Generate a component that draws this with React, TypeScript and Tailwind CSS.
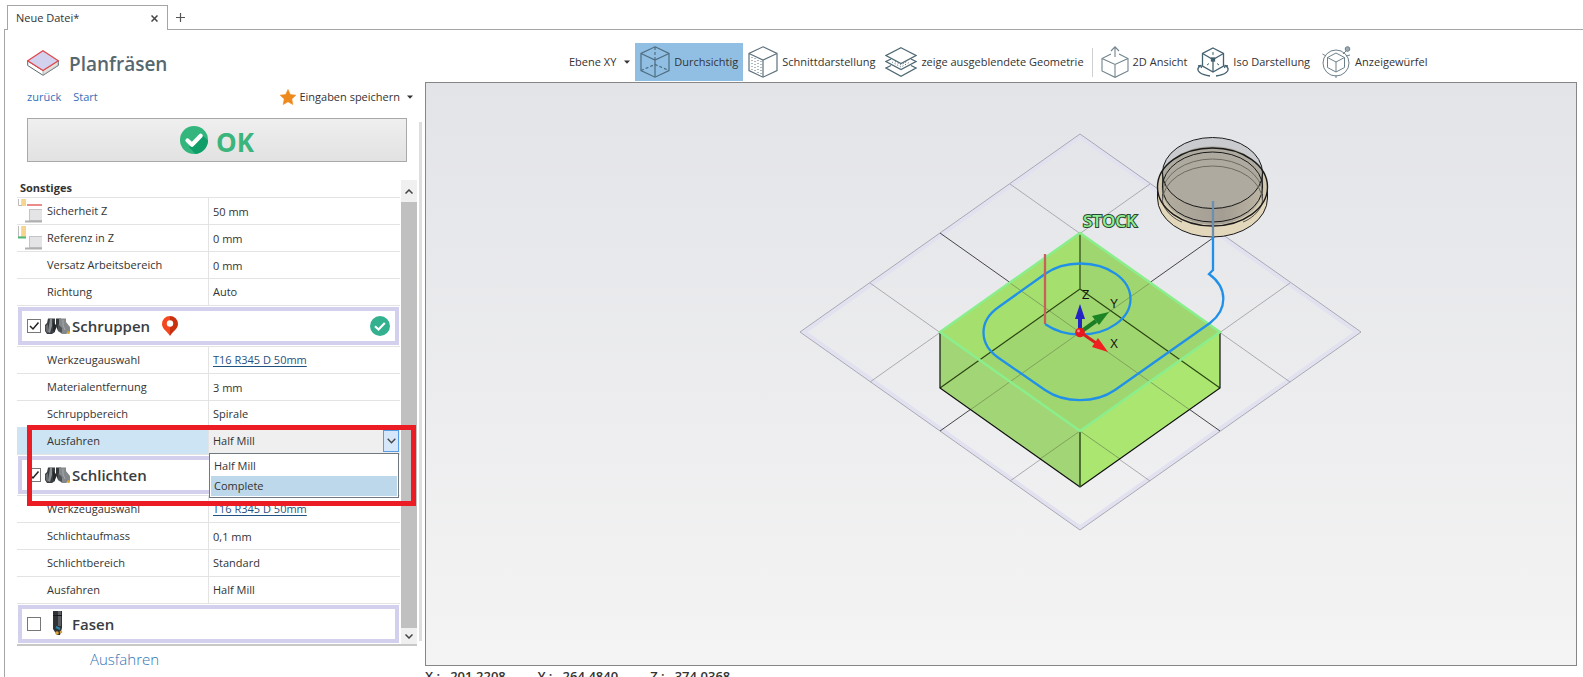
import { useState } from 'react';
import type { ReactNode } from 'react';

type Row = {
  label: string;
  value: string;
  kind?: 'input' | 'text' | 'link';
  icon?: ReactNode;
};

const generalRows: Row[] = [
  { label: 'Sicherheit Z', value: '50 mm', kind: 'input', icon: <SafetyIcon /> },
  { label: 'Referenz in Z', value: '0 mm', kind: 'input', icon: <ReferenceIcon /> },
  { label: 'Versatz Arbeitsbereich', value: '0 mm', kind: 'input' },
  { label: 'Richtung', value: 'Auto' },
];

const roughRows: Row[] = [
  { label: 'Werkzeugauswahl', value: 'T16 R345 D 50mm', kind: 'link' },
  { label: 'Materialentfernung', value: '3 mm', kind: 'input' },
  { label: 'Schruppbereich', value: 'Spirale' },
];

const finishRows: Row[] = [
  { label: 'Werkzeugauswahl', value: 'T16 R345 D 50mm', kind: 'link' },
  { label: 'Schlichtaufmass', value: '0,1 mm', kind: 'input' },
  { label: 'Schlichtbereich', value: 'Standard' },
  { label: 'Ausfahren', value: 'Half Mill' },
];

function SafetyIcon() {
  return (
    <svg className="w-6 h-[26px]" viewBox="0 0 24 26">
      <path d="M0.500 1V7.500H4V1" fill="#fff" stroke="#bbb" />
      <rect x="4" y="1" width="4" height="7" fill="#f6d68e" />
      <path d="M9 7H24" stroke="#e0403c" strokeWidth="1.200" />
      <rect x="11.500" y="11.500" width="13" height="11" fill="#e4e4e6" stroke="#c4c4c6" />
      <path d="M7 23.500H24" stroke="#b0b0b3" strokeWidth="2" />
    </svg>
  );
}

function ReferenceIcon() {
  return (
    <svg className="w-6 h-[26px]" viewBox="0 0 24 26">
      <path d="M0.500 1V12H4V1" fill="#fff" stroke="#bbb" />
      <rect x="4" y="1" width="4" height="11" fill="#f6d68e" />
      <path d="M0 12.500H8" stroke="#4fb978" strokeWidth="2" />
      <rect x="11.500" y="11.500" width="13" height="11" fill="#e4e4e6" stroke="#c4c4c6" />
      <path d="M7 23.500H24" stroke="#b0b0b3" strokeWidth="2" />
    </svg>
  );
}

function FaceMillIcon() {
  return (
    <svg className="w-8 h-[26px]" viewBox="0 0 32 26">
      <path d="M0.700 11V15.500L16 25.300L31.300 15.500V11L16 20.500Z" fill="#fff" stroke="#56676f" />
      <path d="M16 20.500L31 11V15.300L16 25Z" fill="#e2dfdc" stroke="#8a9095" strokeWidth="0.600" />
      <path d="M16 0.700L31.300 10.700L16 20.500L0.700 10.700Z" fill="#d2d1ee" stroke="#e0484c" strokeWidth="1.300" />
    </svg>
  );
}

function CheckCircle({ className }: { className: string }) {
  return (
    <svg className={className} viewBox="0 0 28 28">
      <circle cx="14" cy="14" r="14" fill="#33b67d" />
      <path d="M21.500 8.500L28 14.500A14 14 0 0 1 15.500 28L9 21Z" fill="#0f9d69" />
      <path d="M7.500 14.500L12 18.700L20.700 9.800" fill="none" stroke="#fff" strokeWidth="4.200" strokeLinecap="round" strokeLinejoin="round" />
    </svg>
  );
}

function FlatCheckCircle() {
  return (
    <svg className="size-5" viewBox="0 0 20 20">
      <circle cx="10" cy="10" r="10" fill="#33b08d" />
      <path d="M5 10.300L8.500 13.500L14.800 7" fill="none" stroke="#fff" strokeWidth="2.200" />
    </svg>
  );
}

function CutterIcon() {
  return (
    <svg className="w-[25px] h-[17px]" viewBox="0 0 25 17">
      <path d="M3 0.500H10V14L7 16H2L0 13V7L2 5Z" fill="#3b3e41" />
      <path d="M5 1H7V8L5 15L3 14Z" fill="#8a8e91" />
      <path d="M0.500 8L3 6V15L1 13Z" fill="#686c6f" />
      <path d="M8 4L12 8L10 13H8Z" fill="#26282a" />
      <path d="M11 0.500H16V12L13 13L11 8Z" fill="#34373a" />
      <path d="M14 0.500H21V4L25 9V14L21 16H17L13 13L14 8Z" fill="#85888a" />
      <path d="M13 6L17 10V15L13 13Z" fill="#505356" />
      <path d="M18 2V7L20 12" fill="none" stroke="#a5a8aa" />
      <circle cx="23.500" cy="14.500" r="1.500" fill="#d6a82c" />
    </svg>
  );
}

function ChamferIcon() {
  return (
    <svg className="w-[25px] h-[26px]" viewBox="0 0 25 26">
      <path d="M8 0H17V17L15 24H12L8 18Z" fill="#303236" />
      <path d="M13 0H16V15H13Z" fill="#5c5f63" />
      <path d="M8 4.500H17" stroke="#17181a" />
      <path d="M11 16L15 18" stroke="#2c86a8" strokeWidth="2" />
      <circle cx="12" cy="22" r="1.800" fill="#d9a43a" />
      <circle cx="16" cy="21" r="1.300" fill="#d9a43a" />
    </svg>
  );
}

function PinIcon() {
  return (
    <svg className="w-4 h-5" viewBox="0 0 16 20">
      <path d="M8 0A8 8 0 0 0 0 8C0 13 5 15 8 20Z" fill="#f4471f" />
      <path d="M8 0A8 8 0 0 1 16 8C16 13 11 15 8 20Z" fill="#c9300f" />
      <circle cx="8" cy="7.500" r="3.200" fill="#fff" />
    </svg>
  );
}

function StarIcon() {
  return (
    <svg className="w-4 h-4" viewBox="0 0 16 16">
      <path d="M8 0.500L10.300 5.500L15.800 6.200L11.800 10L12.800 15.500L8 12.800L3.200 15.500L4.200 10L0.200 6.200L5.700 5.500Z" fill="#ee8a1d" stroke="#ee8a1d" strokeWidth="0.600" strokeLinejoin="round" />
    </svg>
  );
}

function Caret() {
  return (
    <svg className="w-[6px] h-[4px]" viewBox="0 0 6 4">
      <path d="M0 0.500H6L3 3.700Z" fill="#333" />
    </svg>
  );
}

function TransparentIcon() {
  return (
    <svg className="w-[30px] h-8" viewBox="0 0 30 32" fill="none" stroke="#4d6d80" strokeWidth="1.200">
      <path d="M15 0.800L29 7.500V24.500L15 31.200L1 24.500V7.500Z" />
      <path d="M1 7.500L15 14L29 7.500M15 14V31" />
      <path d="M15 1V14M1 24.500L15 18.500L29 24.500" strokeDasharray="3 2" />
    </svg>
  );
}

function SectionIcon() {
  return (
    <svg className="w-[30px] h-8" viewBox="0 0 30 32" fill="none" stroke="#5d717c" strokeWidth="1.200">
      <path d="M15 0.800L29 7.500V24.500L15 31.200L1 24.500V7.500Z" />
      <path d="M1 7.500L15 14L29 7.500M15 14V31" />
      <path d="M4 11V25M7 12V26M10 14V28M13 15V29" strokeWidth="1" strokeDasharray="1 2" />
    </svg>
  );
}

function LayersIcon() {
  return (
    <svg className="w-8 h-[30px]" viewBox="0 0 32 30" fill="none" stroke="#4f6873" strokeWidth="1.200">
      <path d="M16 0.700L31 8.500L16 16.500L1 8.500Z" />
      <path d="M6 12L1 14.500L16 22.500L31 14.500L26 12" />
      <path d="M6 18.500L1 21L16 29.300L31 21L26 18.500" />
      <path d="M7 15L16 20L25 15M10 14.500L16 18L22 14.500" strokeWidth="1" strokeDasharray="1 2" />
    </svg>
  );
}

function TopViewIcon() {
  return (
    <svg className="w-7 h-8" viewBox="0 0 28 32" fill="none" stroke="#71838c" strokeWidth="1.100">
      <path d="M10 8L1 12.500V25L14 31.300L27 25V12.500L18 8" />
      <path d="M1 12.500L14 18.500L27 12.500M14 18.500V31" />
      <path d="M14 11V1M10 5L14 0.800L18 5" />
    </svg>
  );
}

function IsoIcon() {
  return (
    <svg className="w-8 h-[30px]" viewBox="0 0 32 30" fill="none" stroke="#456271" strokeWidth="1.300">
      <path d="M16 1L26.500 6.500V19L16 25L5.500 19V6.500Z" />
      <path d="M5.500 6.500L16 12.500L26.500 6.500M16 12.500V25" />
      <path d="M16 5V8M10 18L12 16.500M22 18L20 16.500" strokeWidth="1" />
      <path d="M3 19C-3 24 5 28 13 29M29 19C35 24 27 28 19 29M1 19L4 18.500L4.500 21M31 19L28 18.500L27.500 21" />
      <rect x="14.500" y="11" width="3" height="3" fill="#456271" />
    </svg>
  );
}

function ViewCubeIcon() {
  return (
    <svg className="w-[29px] h-8" viewBox="0 0 29 32" fill="none" stroke="#6d808a">
      <circle cx="14" cy="17" r="13" />
      <path d="M14 7L22.500 11.500V21.500L14 26L5.500 21.500V11.500Z" />
      <path d="M5.500 11.500L14 16L22.500 11.500M14 16V26" />
      <circle cx="25.500" cy="3" r="2.300" fill="#9aabb3" />
      <path d="M21 8L24 5M0.500 8L4 10M24 10L28 9M14 29V32" />
    </svg>
  );
}

function PropertyRow({ row }: { row: Row }) {
  const id = `prop-${row.label.replace(/\s+/g, '-').toLowerCase()}`;
  return (
    <tr className="h-[27px]">
      <th scope="row" className="border-t border-[#e3e3e3] p-0 text-left font-normal">
        <div className="flex h-[26px] items-center">
          <span className="flex w-[30px] shrink-0 pl-px">{row.icon}</span>
          {row.kind === 'input' ? <label htmlFor={id}>{row.label}</label> : row.label}
        </div>
      </th>
      <td className="border-t border-l border-[#e3e3e3] p-0 pl-1">
        {row.kind === 'input' && (
          <input id={id} defaultValue={row.value} className="block h-[26px] w-full bg-transparent outline-none" />
        )}
        {row.kind === 'link' && (
          <a href="#tool" className="text-[#1f5280] underline underline-offset-2">{row.value}</a>
        )}
        {(!row.kind || row.kind === 'text') && row.value}
      </td>
    </tr>
  );
}

function PropertyTable({ rows, children }: { rows: Row[]; children?: ReactNode }) {
  return (
    <table className="w-full table-fixed border-separate border-spacing-0">
      <colgroup>
        <col className="w-[191px]" />
        <col />
      </colgroup>
      <tbody>
        {rows.map((row) => (
          <PropertyRow key={row.label} row={row} />
        ))}
        {children}
      </tbody>
    </table>
  );
}

type SectionProps = {
  title: string;
  icon: ReactNode;
  defaultChecked?: boolean;
  children?: ReactNode;
};

function SectionHeader({ title, icon, defaultChecked, children }: SectionProps) {
  return (
    <div className="h-[41px] border-t border-[#e3e3e3] px-px pt-px pb-px">
      <div className="flex h-[38px] items-center border-4 border-[#d2d0ec] bg-white px-[5px]">
        <label className="flex items-center text-[15px] font-semibold text-[#383d42]">
          <span className="relative mr-1 block size-[14px]">
            <input
              type="checkbox"
              defaultChecked={defaultChecked}
              className="peer block size-[14px] appearance-none border border-[#777] bg-white"
            />
            <svg className="pointer-events-none absolute inset-0 hidden peer-checked:block" viewBox="0 0 14 14">
              <path d="M3 7L6 10L11.500 3.500" fill="none" stroke="#222" strokeWidth="1.500" />
            </svg>
          </span>
          {icon}
          <span className="ml-[2px]">{title}</span>
        </label>
        {children}
      </div>
    </div>
  );
}

function RetractRow() {
  const options = ['Half Mill', 'Complete'];
  const [value, setValue] = useState(options[0]);
  return (
    <tr className="h-[27px]">
      <th scope="row" className="border-t border-[#cde4f5] bg-[#cde4f5] p-0 pl-[30px] text-left font-normal">
        <label htmlFor="retract">Ausfahren</label>
      </th>
      <td className="relative border-t border-l border-[#e3e3e3] bg-[#efefef] p-0">
        <select
          id="retract"
          value={value}
          onChange={(e) => setValue(e.target.value)}
          className="block h-[26px] w-full appearance-none bg-transparent pl-1 outline-none"
        >
          {options.map((o) => (
            <option key={o}>{o}</option>
          ))}
        </select>
        <span className="pointer-events-none absolute top-[2px] right-px flex h-[22px] w-4 items-center justify-center border border-[#569de5] bg-[#d5e7f9]">
          <svg className="h-[6px] w-[9px]" viewBox="0 0 9 6">
            <path d="M0.700 0.700L4.500 4.700L8.300 0.700" fill="none" stroke="#444" strokeWidth="1.300" />
          </svg>
        </span>
        <ul className="absolute top-[25px] right-px left-0 z-10 border border-[#707880] bg-white p-px leading-5">
          <li className="pt-px pl-[3px]">Half Mill</li>
          <li className="bg-[#bdd8ea] pl-[3px]">Complete</li>
        </ul>
      </td>
    </tr>
  );
}

function ScrollBar() {
  return (
    <div className="ml-px flex w-4 flex-col bg-[#f0f0f0]">
      <button type="button" aria-label="Nach oben" className="flex h-[22px] items-center justify-center">
        <svg className="h-[5px] w-2" viewBox="0 0 8 5">
          <path d="M0.500 4.500L4 1L7.500 4.500" fill="none" stroke="#444" strokeWidth="1.500" />
        </svg>
      </button>
      <div className="flex-1 bg-[#c0c0c0]" />
      <button type="button" aria-label="Nach unten" className="flex h-4 items-center justify-center">
        <svg className="h-[5px] w-2" viewBox="0 0 8 5">
          <path d="M0.500 0.500L4 4L7.500 0.500" fill="none" stroke="#444" strokeWidth="1.500" />
        </svg>
      </button>
    </div>
  );
}

function Sidebar() {
  return (
    <aside className="flex w-[420px] shrink-0">
      <div className="w-[414px] pt-4">
        <div className="flex h-[34px] items-center pl-[22px]">
          <FaceMillIcon />
          <h1 className="ml-[10px] pt-[2px] text-[19px] font-semibold text-[#56676f]">Planfräsen</h1>
        </div>
        <div className="flex h-[34px] items-center pl-[22px]">
          <a href="#back" className="text-[#3470b8]">zurück</a>
          <a href="#start" className="ml-3 text-[#3470b8]">Start</a>
          <button type="button" className="mr-[6px] ml-auto flex items-center">
            <StarIcon />
            <span className="mr-[7px] ml-[3px]">Eingaben speichern</span>
            <Caret />
          </button>
        </div>
        <button
          type="button"
          className="mt-1 mr-3 ml-[22px] flex h-[44px] w-[380px] items-center justify-center gap-2 border border-[#a9a9a9] bg-gradient-to-b from-[#efefef] to-[#e2e2e2] text-[26px] font-bold text-[#3bb57c]"
        >
          <CheckCircle className="size-7" />
          <span className="pt-1">OK</span>
        </button>

        <div className="relative mt-[18px] ml-3 flex w-[400px] border-b-2 border-[#c8c8c8]">
          <div className="w-[383px]">
            <h2 className="h-[17px] pl-[3px] leading-4 font-bold text-[#333]">Sonstiges</h2>
            <PropertyTable rows={generalRows} />
            <SectionHeader title="Schruppen" icon={<CutterIcon />} defaultChecked>
              <span className="ml-3"><PinIcon /></span>
              <span className="ml-auto"><FlatCheckCircle /></span>
            </SectionHeader>
            <PropertyTable rows={roughRows}>
              <RetractRow />
            </PropertyTable>
            <SectionHeader title="Schlichten" icon={<CutterIcon />} defaultChecked />
            <PropertyTable rows={finishRows} />
            <SectionHeader title="Fasen" icon={<ChamferIcon />} />
          </div>
          <ScrollBar />
          <div className="pointer-events-none absolute top-[245px] left-[10px] z-20 h-[81px] w-[389px] border-5 border-[#eb1c24]" />
        </div>
        <p className="pt-[2px] pl-[85px] text-[15px] font-light text-[#2f74b5]">Ausfahren</p>
      </div>
      <div className="mt-[92px] mb-9 w-[3px] bg-[#dedede]" />
    </aside>
  );
}

const toolButton = 'flex h-[38px] items-center gap-1 whitespace-nowrap';

function Toolbar() {
  return (
    <div className="flex h-[52px] items-end pb-px pl-36">
      <button type="button" className={`${toolButton} mr-[5px]`}>
        <span className="mr-1">Ebene XY</span>
        <Caret />
      </button>
      <button type="button" className={`${toolButton} bg-[#91bfe3] px-[5px]`}>
        <TransparentIcon />
        Durchsichtig
      </button>
      <button type="button" className={`${toolButton} ml-[5px]`}>
        <SectionIcon />
        Schnittdarstellung
      </button>
      <button type="button" className={`${toolButton} ml-[10px]`}>
        <LayersIcon />
        zeige ausgeblendete Geometrie
      </button>
      <div className="mx-2 mb-1 h-[29px] w-px bg-[#d0d0d0]" />
      <button type="button" className={toolButton}>
        <TopViewIcon />
        2D Ansicht
      </button>
      <button type="button" className={`${toolButton} ml-[10px]`}>
        <IsoIcon />
        Iso Darstellung
      </button>
      <button type="button" className={`${toolButton} ml-3`}>
        <ViewCubeIcon />
        Anzeigewürfel
      </button>
    </div>
  );
}

function Scene() {
  return (
    <svg className="h-full w-full" viewBox="426 83 1150 582">
      <defs>
        <linearGradient id="body" x1="0" x2="1">
          <stop offset="0" stopColor="#b3ad9f" />
          <stop offset="0.600" stopColor="#a39d93" />
          <stop offset="1" stopColor="#bdb6a4" />
        </linearGradient>
      </defs>

      {/* Work plane */}
      <path d="M1080 136.500L1357 332L1080 527.500L804 332Z" fill="none" stroke="#e2e1f0" strokeWidth="4" />
      <path d="M1080 134L1361 332L1080 530L800 332Z" fill="none" stroke="#a9a8b3" />
      <g stroke="#aaaab2">
        <path d="M1010 184L1290 382M870 283L1150 481M870 382L1150 184M1010 481L1290 283" />
        <path d="M940 233L1220 431M940 431L1220 233" stroke="#45454a" />
      </g>

      {/* Stock body */}
      <path d="M940 332L1080 233L1220 332V388L1080 487L940 388Z" fill="#a0d66f" />
      <path d="M940 332L1080 233V289L940 388Z" fill="#a5df6e" />
      <path d="M940 332L1080 431V487L940 388Z" fill="#a2d576" />
      <path d="M1080 431L1220 332V388L1080 487Z" fill="#aae670" />
      <path
        d="M1010 283L1190 410M1150 283L970 410M1080 431L1120 459M1080 431L1040 459"
        fill="none"
        stroke="#7fa35c"
      />
      <g fill="none" stroke="#2c4713" strokeWidth="1.200">
        <path d="M1080 234V289L940 388M1080 289L1220 388" />
      </g>
      <path d="M940 332V388L1080 487L1220 388V332" fill="none" stroke="#111" strokeWidth="1.200" />
      <path d="M1080 431V487" stroke="#36551c" strokeWidth="1.600" />
      <path d="M1080 233L1220 332L1080 431L940 332Z" fill="none" stroke="#8bee8c" strokeWidth="2.500" />

      {/* Cutter */}
      <path d="M1157.500 187V198A55 39 0 0 0 1267.500 198V187Z" fill="#e2d6bb" />
      <ellipse cx="1212.500" cy="187" rx="55" ry="39" fill="#d3c9b1" />
      <ellipse cx="1212.500" cy="187" rx="51" ry="38" fill="url(#body)" />
      <path d="M1162.500 187V173A50 35 0 0 1 1262.500 173V187A50 38 0 0 0 1162.500 187Z" fill="#c9cbce" />
      <path d="M1162.500 173A50 35 0 0 0 1262.500 173A52 37 0 0 0 1162.500 173Z" fill="#aeaa9f" />
      <g fill="none" stroke="#1a1a1a">
        <ellipse cx="1212.500" cy="173" rx="50" ry="35.500" />
        <ellipse cx="1212.500" cy="187" rx="55" ry="39" strokeWidth="1.400" />
        <ellipse cx="1212.500" cy="187" rx="50" ry="35" />
        <path d="M1157.500 187V198A55 39 0 0 0 1267.500 198V187" />
        <path d="M1162.500 173V201M1262.500 173V201" strokeWidth="0.800" />
        <path d="M1162.500 194A50 35 0 0 1 1262.500 194M1162.500 201A50 35 0 0 1 1262.500 201" stroke="#6d6a62" />
        <path d="M1162.500 201C1164 212 1176 220 1182 222M1262.500 201C1261 212 1249 220 1243 222" strokeWidth="0.700" />
      </g>

      {/* Tool path */}
      <path
        d="M1045 324A50 35.500 0 1 0 1045 274L998 307.500A50 35.500 0 0 0 998 357.500L1045 390A50 35.500 0 0 0 1115 390L1210 323A50 35.500 0 0 0 1209 274L1213 270V237"
        fill="none"
        stroke="#2090e8"
        strokeWidth="2.300"
      />
      <path d="M1213 201V237" stroke="#6b8fae" strokeWidth="2.300" />
      <path d="M1045 254V324" stroke="#c8615c" strokeWidth="2.300" />

      {/* Origin axes */}
      <path d="M1080 332V316" stroke="#2424c4" strokeWidth="4" />
      <path d="M1080 304L1085 319H1075Z" fill="#2424c4" />
      <path d="M1082 331L1096 321" stroke="#1c7d26" strokeWidth="4" />
      <path d="M1109 312L1099 325L1092 316Z" fill="#1c8424" />
      <path d="M1080 332L1096 343" stroke="#d82020" strokeWidth="3" />
      <path d="M1108 352L1092 347L1098 338Z" fill="#f02020" />
      <circle cx="1080" cy="332.500" r="4.800" fill="#e81820" />
      <circle cx="1078.500" cy="331" r="1.400" fill="#ff9090" />
      <g fill="#111" fontSize="12" fontFamily="Liberation Sans, sans-serif">
        <text x="1082" y="299">Z</text>
        <text x="1110" y="308">Y</text>
        <text x="1110" y="348">X</text>
      </g>
      <text
        x="1083"
        y="227"
        fontSize="17"
        fontFamily="Open Sans, sans-serif"
        fontWeight="600"
        fill="#90ee90"
        stroke="#2a4634"
        strokeWidth="2"
        paintOrder="stroke"
      >
        STOCK
      </text>
    </svg>
  );
}

export default function App() {
  return (
    <div className="flex h-screen flex-col overflow-hidden bg-white font-['Open_Sans',sans-serif] text-[11px] text-[#333]">
      <header className="ml-1 flex h-[30px] shrink-0 items-end border-b border-[#a5a5a5] pl-[3px]">
        <div className="-mb-px flex h-[25px] w-[161px] items-center justify-between border border-b-0 border-[#a5a5a5] bg-white pr-[9px] pl-2">
          <span>Neue Datei*</span>
          <button type="button" aria-label="Schließen">
            <svg className="size-[7px]" viewBox="0 0 7 7">
              <path d="M0.500 0.500L6.500 6.500M6.500 0.500L0.500 6.500" stroke="#444" strokeWidth="1.500" />
            </svg>
          </button>
        </div>
        <button type="button" aria-label="Neuer Tab" className="mb-[7px] ml-2">
          <svg className="size-[9px]" viewBox="0 0 9 9">
            <path d="M4.500 0V9M0 4.500H9" stroke="#555" strokeWidth="1.200" />
          </svg>
        </button>
      </header>

      <div className="ml-1 flex min-h-0 flex-1 border-l border-[#a5a5a5]">
        <Sidebar />
        <main className="flex min-w-0 flex-1 flex-col">
          <Toolbar />
          <div className="mr-[6px] min-h-0 flex-1 border border-[#868686] bg-gradient-to-b from-[#e3e4e8] to-[#f4f4f4]">
            <Scene />
          </div>
          <footer className="flex h-[11px] gap-8 overflow-hidden text-[13px] leading-5 font-semibold">
            <span>X :&nbsp;&nbsp; 201.2208</span>
            <span>Y :&nbsp;&nbsp; 264.4840</span>
            <span>Z :&nbsp;&nbsp; 374.0368</span>
          </footer>
        </main>
      </div>
    </div>
  );
}
